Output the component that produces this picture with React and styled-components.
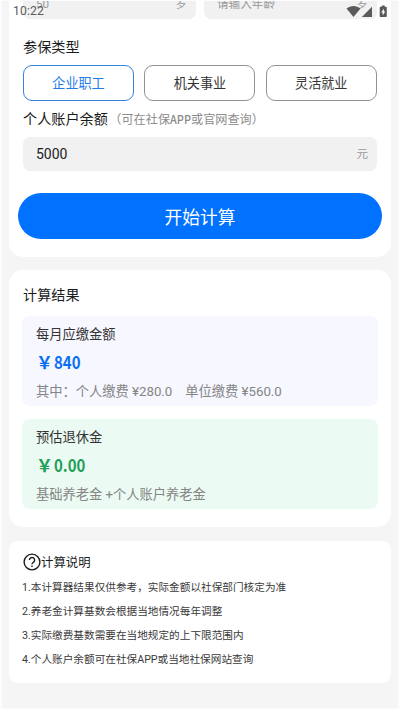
import React from 'react';
import styled, { createGlobalStyle } from 'styled-components';

const GlobalStyle = createGlobalStyle`
  * { box-sizing: border-box; }
  body { margin: 0; background: #fdfdfd; }
`;

const Screen = styled.main`
  position: relative;
  width: 400px;
  height: 710px;
  overflow: hidden;
  background: #f5f5f5;
  border: solid #fcfcfc;
  border-width: 1px 2px 2px;
  padding: 0 7px;
  color: #222;
  font-family: Roboto, 'Noto Sans CJK SC', sans-serif;
  white-space: nowrap;
`;

const StatusBar = styled.header`
  position: absolute;
  top: 0;
  left: 0;
  right: 0;
  z-index: 2;
  height: 20px;
  padding: 0 10px 0 11px;
  display: flex;
  align-items: center;
  justify-content: space-between;
  color: #5a5a5a;
  font-size: 12.2px;
  letter-spacing: 0.1px;
`;

const StatusIcons = styled.svg`
  display: block;
  width: 42px;
  height: 14px;
  margin-top: -1px;
  fill: #5a5a5a;
`;

const Card = styled.section`
  background: #fff;
  border-radius: ${(p) => p.$radius || '14px'};
  padding: ${(p) => p.$pad};
  height: ${(p) => p.$height};
  margin-bottom: ${(p) => p.$gap || '0'};
`;

const AgeRow = styled.div`
  display: grid;
  grid-template-columns: 1fr 1fr;
  gap: 8px;
  height: 18px;
`;

const Field = styled.div`
  display: flex;
  align-items: center;
  justify-content: space-between;
  height: ${(p) => p.$height || '34px'};
  padding: 0 9px 0 13px;
  background: #f1f1f1;
  border-radius: ${(p) => (p.$clipped ? '0 0 7px 7px' : '7px')};
  color: ${(p) => (p.$clipped ? '#999' : '#222')};
  font-size: ${(p) => (p.$clipped ? '11.6px' : '14px')};
  line-height: 16px;
  ${(p) => p.$clipped && 'padding-bottom: 12px;'}
`;

const AgeValue = styled.span`
  font-size: 11.7px;
`;

const Unit = styled.span`
  color: #999;
  font-size: 11.5px;
`;

const Heading = styled.h2`
  display: flex;
  align-items: center;
  margin: ${(p) => p.$margin || '0'};
  height: 20px;
  font-size: 14.15px;
  font-weight: 400;
  line-height: 20px;
  color: #1c1c1c;
`;

const Hint = styled.span`
  margin-left: 1.5px;
  font-family: 'Noto Sans CJK SC', sans-serif;
  font-size: 12.15px;
  color: #8c8c8c;
`;

const HintLatin = styled.span`
  display: inline-block;
  width: 21px;
  transform: scaleX(0.9);
  transform-origin: left;
  font-weight: 500;
`;

const Options = styled.div`
  display: grid;
  grid-template-columns: repeat(3, 111px);
  column-gap: 10.4px;
`;

const Option = styled.button`
  height: 36px;
  padding: 0 0 1px;
  border: 1px solid ${(p) => (p.$active ? '#3284dc' : '#929292')};
  border-radius: 9px;
  background: #fff;
  color: ${(p) => (p.$active ? '#1f7be8' : '#333')};
  font-family: inherit;
  font-size: 13.1px;
`;

const Submit = styled.button`
  display: block;
  width: 364px;
  height: 46px;
  margin: 22px 0 0 -5px;
  padding: 0;
  border: 0;
  border-radius: 23px;
  background: #0072ff;
  color: #fff;
  font-family: inherit;
  font-size: 17.7px;
`;

const Result = styled.div`
  height: 90px;
  margin: 0 -1px 13px;
  padding: 9px 14px 0;
  border-radius: 8px;
  background: ${(p) => (p.$green ? '#ebfbf3' : '#f6f7ff')};
`;

const ResultTitle = styled.div`
  height: 20px;
  line-height: 20px;
  font-size: 13.25px;
  color: #333;
`;

const Amount = styled.div`
  display: flex;
  align-items: center;
  height: 37px;
  padding-bottom: 4px;
  color: ${(p) => (p.$green ? '#1f9f58' : '#0b6ff2')};
  font-family: 'Noto Sans CJK SC', sans-serif;
  font-weight: 700;
  font-size: 17.4px;
`;

const Yen = styled.span`
  width: 18px;
  font-size: 17px;
`;

const Figure = styled.span`
  transform: scaleX(0.86);
  transform-origin: left;
`;

const Detail = styled.div`
  display: flex;
  height: 20px;
  line-height: 20px;
  font-size: 13.25px;
  color: #858585;
`;

const DetailItem = styled.span`
  margin-right: 13px;
  white-space: pre;
`;

const NoteTitle = styled.h3`
  display: flex;
  align-items: center;
  margin: 0 0 4px;
  height: 20px;
  font-size: 12.4px;
  font-weight: 400;
  color: #1c1c1c;
`;

const HelpIcon = styled.svg`
  width: 18px;
  height: 18px;
  fill: none;
  stroke: #1c1c1c;
  stroke-width: 1.4;
`;

const Notes = styled.ol`
  list-style: none;
  margin: 0 0 0 -1px;
  padding: 0;
`;

const Note = styled.li`
  height: 24px;
  line-height: 24px;
  font-size: 10.65px;
  color: #3a3a3a;
`;

const types = ['企业职工', '机关事业', '灵活就业'];
const notes = [
  '1.本计算器结果仅供参考，实际金额以社保部门核定为准',
  '2.养老金计算基数会根据当地情况每年调整',
  '3.实际缴费基数需要在当地规定的上下限范围内',
  '4.个人账户余额可在社保APP或当地社保网站查询',
];

export default function App() {
  return (
    <>
      <GlobalStyle />
      <Screen>
        <StatusBar>
          <span>10:22</span>
          <StatusIcons viewBox="0 0 42 14">
            <path d="M0.5 4.5C4.8 1 10.2 1 14.5 4.5L7.5 13Z" />
            <path d="M26 2.8V13H15.8Z" />
            <path
              fillRule="evenodd"
              d="M34.5 2.8h1.2V1.5h3v1.3H40q.8 0 .8.8v8.6q0 .8-.8.8h-5.5q-.8 0-.8-.8V3.6q0-.8.8-.8ZM37.8 4.5 35.2 8.4h1.5v3l2.6-4h-1.5Z"
            />
          </StatusIcons>
        </StatusBar>

        <Card $radius="0 0 14px 14px" $pad="0 14px" $height="256px" $gap="13px">
          <AgeRow>
            <Field $clipped $height="18px"><AgeValue>50</AgeValue><Unit>岁</Unit></Field>
            <Field $clipped $height="18px"><span>请输入年龄</span><Unit>岁</Unit></Field>
          </AgeRow>
          <Heading $margin="18px 0 8px">参保类型</Heading>
          <Options>
            {types.map((type, i) => (
              <Option key={type} $active={i === 0}>{type}</Option>
            ))}
          </Options>
          <Heading $margin="8px 0">
            个人账户余额<Hint>（可在社保<HintLatin>APP</HintLatin>或官网查询）</Hint>
          </Heading>
          <Field><span>5000</span><Unit>元</Unit></Field>
          <Submit>开始计算</Submit>
        </Card>

        <Card $pad="15px 14px 0" $height="257px" $gap="14px">
          <Heading $margin="0 0 11px">计算结果</Heading>
          <Result>
            <ResultTitle>每月应缴金额</ResultTitle>
            <Amount><Yen>￥</Yen><Figure>840</Figure></Amount>
            <Detail>
              <DetailItem>其中：个人缴费 ¥280.0</DetailItem>
              <DetailItem>单位缴费 ¥560.0</DetailItem>
            </Detail>
          </Result>
          <Result $green>
            <ResultTitle>预估退休金</ResultTitle>
            <Amount $green><Yen>￥</Yen><Figure>0.00</Figure></Amount>
            <Detail>基础养老金 +个人账户养老金</Detail>
          </Result>
        </Card>

        <Card $radius="9px" $pad="11px 14px 0" $height="142px">
          <NoteTitle>
            <HelpIcon viewBox="0 0 18 18">
              <circle cx="9" cy="9" r="7.9" />
              <path d="M6.4 7.1a2.6 2.6 0 1 1 4.2 2C9.6 9.8 9 10.1 9 11.2M9 12.4v1.5" />
            </HelpIcon>
            计算说明
          </NoteTitle>
          <Notes>
            {notes.map((note) => <Note key={note}>{note}</Note>)}
          </Notes>
        </Card>
      </Screen>
    </>
  );
}
